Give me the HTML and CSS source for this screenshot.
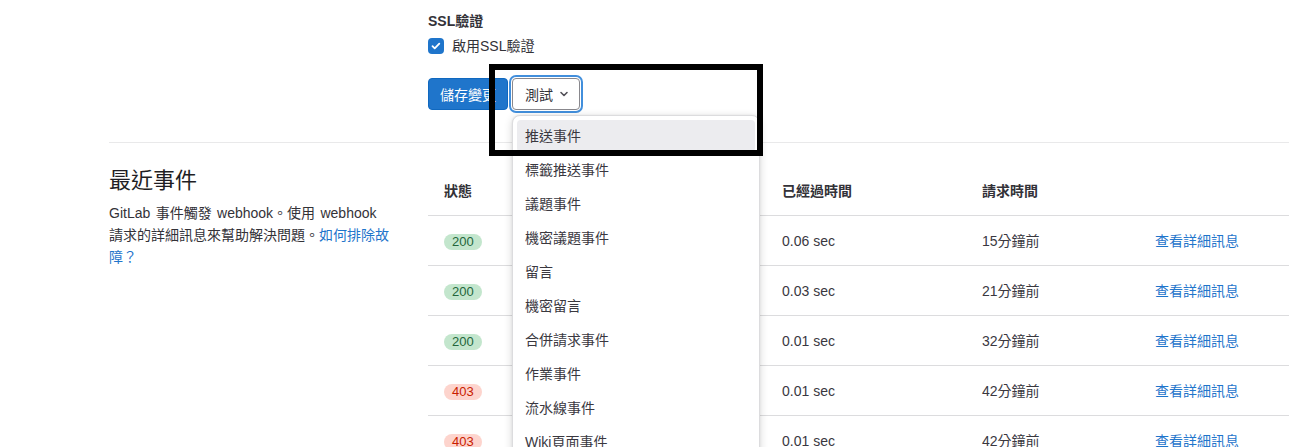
FILE: index.html
```html
<!DOCTYPE html>
<html lang="zh-Hant">
<head>
<meta charset="utf-8">
<title>Webhook</title>
<link rel="stylesheet" href="styles.css">
</head>
<body>
<div class="page">
  <section class="row settings">
    <div class="side"></div>
    <div class="main">
      <div class="field-label">SSL驗證</div>
      <label class="check">
        <span class="checkbox">
          <svg width="16" height="16" viewBox="0 0 16 16"><path d="M4.5 8.2l2.2 2.2 4.6-4.8" fill="none" stroke="#fff" stroke-width="1.8" stroke-linecap="round" stroke-linejoin="round"/></svg>
        </span>
        <span>啟用SSL驗證</span>
      </label>
      <div class="actions">
        <button class="btn btn-primary">儲存變更</button>
        <div class="dropdown">
          <button class="btn btn-default">
            <span>測試</span>
            <svg class="chevron" width="16" height="16" viewBox="0 0 16 16"><path d="M5 6.5l3 3 3-3" fill="none" stroke="#535158" stroke-width="1.6" stroke-linecap="round" stroke-linejoin="round"/></svg>
          </button>
          <ul class="menu">
            <li class="item active">推送事件</li>
            <li class="item">標籤推送事件</li>
            <li class="item">議題事件</li>
            <li class="item">機密議題事件</li>
            <li class="item">留言</li>
            <li class="item">機密留言</li>
            <li class="item">合併請求事件</li>
            <li class="item">作業事件</li>
            <li class="item">流水線事件</li>
            <li class="item">Wiki頁面事件</li>
            <li class="item">發布事件</li>
          </ul>
        </div>
      </div>
    </div>
  </section>
  <hr class="divider">
  <section class="row events">
    <div class="side">
      <h2 class="title">最近事件</h2>
      <p class="desc">GitLab 事件觸發 webhook。使用 webhook 請求的詳細訊息來幫助解決問題。<a href="#">如何排除故障？</a></p>
    </div>
    <div class="main">
      <div class="table">
        <div class="tr th">
          <div class="td">狀態</div>
          <div class="td">觸發器</div>
          <div class="td">已經過時間</div>
          <div class="td">請求時間</div>
          <div class="td"></div>
        </div>
        <div class="tr">
          <div class="td"><span class="badge ok">200</span></div>
          <div class="td">推送事件</div>
          <div class="td">0.06 sec</div>
          <div class="td">15分鐘前</div>
          <div class="td"><a href="#">查看詳細訊息</a></div>
        </div>
        <div class="tr">
          <div class="td"><span class="badge ok">200</span></div>
          <div class="td">推送事件</div>
          <div class="td">0.03 sec</div>
          <div class="td">21分鐘前</div>
          <div class="td"><a href="#">查看詳細訊息</a></div>
        </div>
        <div class="tr">
          <div class="td"><span class="badge ok">200</span></div>
          <div class="td">推送事件</div>
          <div class="td">0.01 sec</div>
          <div class="td">32分鐘前</div>
          <div class="td"><a href="#">查看詳細訊息</a></div>
        </div>
        <div class="tr">
          <div class="td"><span class="badge err">403</span></div>
          <div class="td">推送事件</div>
          <div class="td">0.01 sec</div>
          <div class="td">42分鐘前</div>
          <div class="td"><a href="#">查看詳細訊息</a></div>
        </div>
        <div class="tr">
          <div class="td"><span class="badge err">403</span></div>
          <div class="td">推送事件</div>
          <div class="td">0.01 sec</div>
          <div class="td">42分鐘前</div>
          <div class="td"><a href="#">查看詳細訊息</a></div>
        </div>
      </div>
    </div>
  </section>
</div>
<div class="highlight-box"></div>
</body>
</html>
```

FILE: styles.css
```css
* { box-sizing: border-box; }
html, body {
  margin: 0;
  padding: 0;
  width: 1289px;
  height: 447px;
  overflow: hidden;
  background: #fff;
}
body {
  font-family: "Liberation Sans", "Noto Sans CJK TC", sans-serif;
  font-size: 14px;
  line-height: 20px;
  color: #333238;
  position: relative;
}
a { color: #1f75cb; text-decoration: none; }

.page {
  padding-left: 109px;
  width: 1289px;
}
.row {
  display: grid;
  grid-template-columns: 319px 1fr;
}
.settings { padding-top: 11px; }
.field-label { font-weight: bold; margin-bottom: 5px; }
.check {
  display: flex;
  align-items: center;
  gap: 8px;
  height: 20px;
}
.checkbox {
  width: 16px;
  height: 16px;
  border-radius: 4px;
  background: #1f75cb;
  display: flex;
}
.actions {
  display: flex;
  gap: 4px;
  margin-top: 22px;
}
.btn {
  height: 32px;
  border-radius: 4px;
  font-family: inherit;
  font-size: 14px;
  display: flex;
  align-items: center;
  white-space: nowrap;
  cursor: pointer;
}
.btn-primary {
  background: #1f75cb;
  color: #fff;
  border: 1px solid #1068bf;
  padding: 0 11px;
  width: 80px;
  justify-content: center;
}
.btn-default {
  background: #fff;
  color: #333238;
  border: 1px solid #89888d;
  padding: 0 7px 0 12px;
  box-shadow: 0 0 0 1px #fff, 0 0 0 3px #428fdc;
}
.chevron { margin-left: 3px; flex: none; }
.dropdown { position: relative; }
.menu {
  position: absolute;
  left: 0;
  top: 37px;
  width: 248px;
  margin: 0;
  padding: 4px;
  list-style: none;
  background: #fff;
  border: 1px solid #dcdcde;
  border-radius: 8px;
  box-shadow: 0 0 2px rgba(5, 5, 6, 0.08), 0 2px 8px rgba(5, 5, 6, 0.16);
  z-index: 5;
}
.item {
  height: 32px;
  margin-bottom: 2px;
  padding: 0 8px;
  display: flex;
  align-items: center;
  border-radius: 4px;
  color: #3a383f;
}
.item.active { background: #ececef; }

.divider {
  border: 0;
  border-top: 1px solid #e9e9ea;
  margin: 32px 0 0;
  height: 0;
}
.events { padding-top: 24px; }
.title {
  margin: 0;
  font-size: 22px;
  line-height: 28px;
  font-weight: normal;
  color: #1f1e24;
}
.desc {
  margin: 7px 0 0;
  width: 284px;
  line-height: 22px;
  word-spacing: 1.5px;
  color: #333238;
}

.table { width: 861px; }
.tr {
  display: grid;
  grid-template-columns: 170px 168px 200px 173px 1fr;
  height: 50px;
  border-bottom: 1px solid #dcdcde;
  align-items: center;
}
.tr.th { height: 49px; font-weight: bold; }
.td { padding: 0 16px; color: #3a383f; }
.th .td { color: #333238; }
.badge {
  display: inline-flex;
  align-items: center;
  height: 16px;
  padding: 0 8px;
  border-radius: 8px;
  font-size: 13px;
  line-height: 16px;
}
.badge.ok { background: #c3e6cd; color: #24663b; }
.badge.err { background: #fdd4cd; color: #c91c00; }

.highlight-box {
  position: absolute;
  left: 489px;
  top: 64px;
  width: 274px;
  height: 92px;
  border: 6px solid #000;
  z-index: 10;
}
```
